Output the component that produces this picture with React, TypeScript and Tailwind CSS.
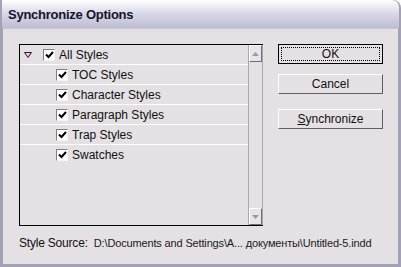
import React from 'react'

const items = ['TOC Styles', 'Character Styles', 'Paragraph Styles', 'Trap Styles', 'Swatches']

function Check() {
  return (
    <div className="w-[12px] h-[12px] bg-white border-t border-l border-[#808080] border-b border-r border-b-[#f4f4f4] border-r-[#f4f4f4] flex items-center justify-center shrink-0">
      <svg width="9" height="8" viewBox="0 0 9 8">
        <path d="M1 3.5 L3.5 6 L8 1" fill="none" stroke="#000" strokeWidth="2" />
      </svg>
    </div>
  )
}

function Row({ label, child, last }: { label: string; child?: boolean; last?: boolean }) {
  return (
    <div className={`h-[20px] flex items-center shrink-0 ${last ? '' : 'border-b border-white'} ${child ? 'pl-[36px]' : 'pl-[4px]'}`}>
      {!child && (
        <svg width="8" height="6" viewBox="0 0 8 6" className="mr-[11px]">
          <path d="M0.5 0.5 H7.5 L4 5.5 Z" fill="#e4e0e4" stroke="#1c1c2a" strokeWidth="1" />
          <path d="M4.5 4.5 L6.8 1.2" stroke="#c21ea8" strokeWidth="1.2" />
        </svg>
      )}
      <Check />
      <span className="ml-[4px] text-[12px] text-[#111] leading-none">{label}</span>
    </div>
  )
}

function ScrollBtn({ up }: { up?: boolean }) {
  return (
    <div className="h-[17px] w-full bg-[#e8e4e8] border border-t-white border-l-white border-b-[#6f6e78] border-r-[#6f6e78] flex items-center justify-center shrink-0">
      <svg width="7" height="4" viewBox="0 0 7 4">
        {up ? <path d="M0 4 H7 L3.5 0 Z" fill="#9b9aa6" /> : <path d="M0 0 H7 L3.5 4 Z" fill="#9b9aa6" />}
      </svg>
    </div>
  )
}

function Btn({ children, def }: { children: React.ReactNode; def?: boolean }) {
  return (
    <div
      className={`h-[20px] w-[105px] bg-[#e4e0e4] flex items-center justify-center text-[12px] text-[#111] ${
        def ? 'border border-black p-[2px]' : 'border border-t-white border-l-white border-b-[#5f5e68] border-r-[#5f5e68]'
      }`}
    >
      {def ? (
        <div className="w-full h-full border border-dotted border-black flex items-center justify-center">
          {children}
        </div>
      ) : (
        children
      )}
    </div>
  )
}

export default function App() {
  return (
    <div className="w-[401px] h-[267px] flex flex-col bg-[#a3a1b3] font-['Liberation_Sans',Arial,sans-serif] rounded-tr-[8px] overflow-hidden">
      {/* Title bar */}
      <div className="h-[28px] shrink-0 ml-[2px] mr-[2px] bg-gradient-to-b from-[#ffffff] via-[#d8d7e6] to-[#bebdd2] rounded-tr-[7px] flex items-center pl-[6px] pt-[2px]">
        <span className="text-[13px] font-bold text-[#14142a] tracking-[-0.25px]">Synchronize Options</span>
      </div>

      {/* Body */}
      <div className="flex-1 mx-[3px] mb-[3px] bg-[#e4e0e4] border-t border-[#c8c6d4] flex flex-col pl-[16px] pt-[15px]">
        <div className="flex">
          {/* List */}
          <div className="w-[244px] h-[182px] border-t border-l border-b border-black flex">
            <div className="flex-1 flex flex-col">
              <Row label="All Styles" />
              {items.map((it, i) => (
                <Row key={it} label={it} child last={i === items.length - 1} />
              ))}
            </div>
            <div className="w-[15px] flex flex-col border-l border-r border-[#a9a8b0]">
              <ScrollBtn up />
              <div className="flex-1" />
              <ScrollBtn />
            </div>
          </div>

          {/* Buttons */}
          <div className="ml-[15px] flex flex-col">
            <Btn def>OK</Btn>
            <div className="h-[10px]" />
            <Btn>Cancel</Btn>
            <div className="h-[15px]" />
            <Btn>
              <span>
                <span className="underline">S</span>ynchronize
              </span>
            </Btn>
          </div>
        </div>

        {/* Source */}
        <div className="mt-[9px] h-[16px] flex items-center">
          <span className="text-[12px] text-[#111] tracking-[-0.2px]">Style Source:</span>
          <span className="ml-[6px] text-[11px] text-[#1a1a22] tracking-[-0.15px]">D:\Documents and Settings\A... документы\Untitled-5.indd</span>
        </div>
      </div>
    </div>
  )
}
